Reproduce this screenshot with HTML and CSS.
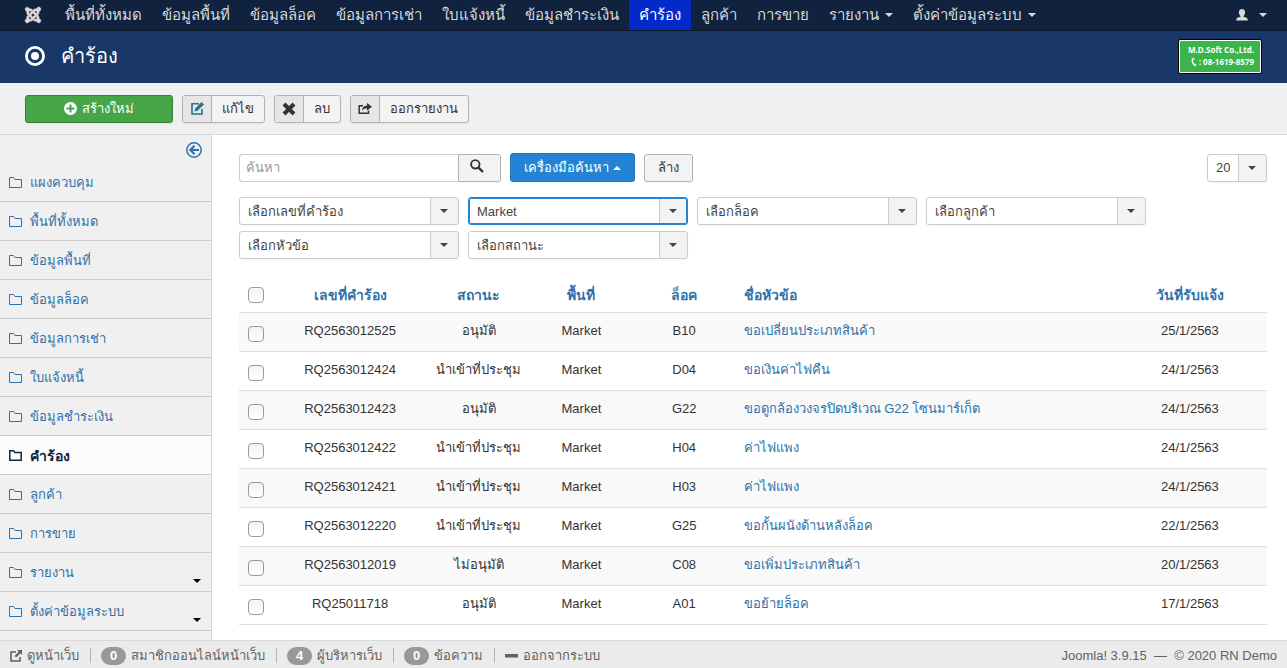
FILE: index.html
```html
<!DOCTYPE html>
<html lang="th">
<head>
<meta charset="utf-8">
<title>คำร้อง</title>
<link rel="stylesheet" href="styles.css">
</head>
<body class="page">
<svg class="sprite" aria-hidden="true">
  <symbol id="folder" viewBox="0 0 13 11"><path d="M.5 10.500V.5h4l1.500 2h6.500v8z" fill="none" stroke="currentColor"/></symbol>
  <symbol id="folder-bold" viewBox="0 0 13 11"><path d="M.8 10.200V.8h3.700L6 2.500h6.200v7.700z" fill="none" stroke="currentColor" stroke-width="1.500"/></symbol>
</svg>

<nav class="navbar">
  <a class="nav-link nav-logo" href="#" aria-label="Joomla"><svg width="18" height="18" viewBox="0 0 448 512"><path fill="currentColor" stroke="currentColor" stroke-width="14" d="M.6 92.1C.6 58.8 27.4 32 60.4 32c30 0 54.5 21.9 59.2 50.2 32.6-7.6 67.1.6 96.5 30l-44.3 44.3c-20.5-20.5-42.6-16.3-55.4-3.5-14.3 14.3-14.3 37.9 0 52.2l99.5 99.5-44 44.3c-87.7-87.2-49.7-49.7-99.8-99.7-26.8-26.5-35-64.8-24.8-98.9C20.4 144.6.6 120.7.6 92.1zm129.5 116.4l44.3 44.3c10-10 89.7-89.7 99.7-99.8 14.3-14.3 37.6-14.3 51.9 0 12.8 12.8 17 35-3.5 55.4l44 44.3c31.2-31.2 38.5-67.6 28.9-101.2 29.2-4.1 51.9-29.2 51.9-59.5 0-33.2-26.8-60.1-59.8-60.1-30.3 0-55.4 22.5-59.5 51.6-33.8-9.9-71.7-1.5-98.3 25.1-18.3 19.1-71.1 71.5-99.6 99.9zm266.3 152.2c8.2-32.7-.9-68.5-26.3-93.9-11.8-12.2 5 4.7-99.5-99.7l-44.3 44.3 99.7 99.7c14.3 14.3 14.3 37.6 0 51.9-12.8 12.8-35 17-55.4-3.5l-44 44.3c27.6 30.2 68 38.8 102.7 28 5.5 27.4 29.7 48.1 58.9 48.1 33 0 59.8-26.8 59.8-60.1 0-30.2-22.5-55-51.6-59.1zm-84.3-53.1l-44-44.3c-87 86.4-50.4 50.4-99.7 99.8-14.3 14.3-37.6 14.3-51.9 0-13.1-13.4-16.9-35.3 3.2-55.4l-44-44.3c-30.2 30.2-38 65.2-29.5 98.3-26.7 6-46.2 29.9-46.2 58.2C0 453.2 26.8 480 59.8 480c28.6 0 52.5-19.8 58.6-46.7 32.7 8.2 68.5-.6 94.2-26 32.1-32 12.2-12.4 99.5-99.7z"/></svg></a>
  <a class="nav-link" href="#">พื้นที่ทั้งหมด</a>
  <a class="nav-link" href="#">ข้อมูลพื้นที่</a>
  <a class="nav-link" href="#">ข้อมูลล็อค</a>
  <a class="nav-link" href="#">ข้อมูลการเช่า</a>
  <a class="nav-link" href="#">ใบแจ้งหนี้</a>
  <a class="nav-link" href="#">ข้อมูลชำระเงิน</a>
  <a class="nav-link nav-active" href="#">คำร้อง</a>
  <a class="nav-link" href="#">ลูกค้า</a>
  <a class="nav-link" href="#">การขาย</a>
  <a class="nav-link" href="#">รายงาน<span class="caret"></span></a>
  <a class="nav-link" href="#">ตั้งค่าข้อมูลระบบ<span class="caret"></span></a>
  <a class="nav-link nav-user" href="#" aria-label="User"><svg width="12" height="12" viewBox="0 0 12 12"><path fill="currentColor" d="M6 0c2 0 3.100 1.400 3.100 3.300C9.100 5 8.300 6.500 7.500 7v.8c2.500.4 4.300 1.400 4.300 3.200v.6H.2V11c0-1.800 1.800-2.800 4.300-3.200V7C3.700 6.500 2.900 5 2.900 3.300 2.900 1.400 4 0 6 0z"/></svg><span class="caret"></span></a>
</nav>

<header class="header">
  <h1 class="header-title"><svg width="20" height="20" viewBox="0 0 20 20"><circle cx="10" cy="10" r="8.600" fill="none" stroke="currentColor" stroke-width="2.800"/><circle cx="10" cy="10" r="4" fill="currentColor"/></svg>คำร้อง</h1>
  <a class="brand" href="#">
    <span class="brand-name">M.D.Soft Co.,Ltd.</span>
    <span class="brand-phone"><svg width="6" height="10" viewBox="0 0 6 10"><path d="M2.300 1C.3 3 1.300 7 4.800 8.800M1.800 1.500l1.700 1M3.800 8.300l1.200-1.500" fill="none" stroke="currentColor" stroke-width="1.300"/></svg>: 08-1619-8579</span>
  </a>
</header>

<div class="toolbar">
  <button class="btn btn-new" type="button"><svg width="13" height="13" viewBox="0 0 13 13"><circle cx="6.500" cy="6.500" r="6.500" fill="#fff"/><path d="M6.500 2.500v8M2.500 6.500h8" stroke="#46a546" stroke-width="2"/></svg>สร้างใหม่</button>
  <button class="btn btn-tool" type="button"><span class="btn-icon btn-icon-edit"><svg width="13" height="13" viewBox="0 0 13 13"><path d="M8 1.800H1v10.200h10V7" fill="none" stroke="currentColor" stroke-width="1.600"/><path d="M10.500 0L13 2.400 6.500 8.800 3.500 9.600 4.200 6.500z" fill="currentColor"/></svg></span><span class="btn-text">แก้ไข</span></button>
  <button class="btn btn-tool" type="button"><span class="btn-icon"><svg width="14" height="14" viewBox="0 0 14 14"><path d="M2 2l10 10M12 2L2 12" stroke="currentColor" stroke-width="4"/></svg></span><span class="btn-text">ลบ</span></button>
  <button class="btn btn-tool" type="button"><span class="btn-icon"><svg width="14" height="12" viewBox="0 0 14 12"><path d="M5 2.700H1.200V10.200h9.300V7.500" fill="none" stroke="currentColor" stroke-width="1.500"/><path d="M9 0l5 3.800-5 3.700V5.200C6.500 5.200 5 6 4 8c0-3.500 2-5.300 5-5.600z" fill="currentColor"/></svg></span><span class="btn-text">ออกรายงาน</span></button>
</div>

<div class="body">
  <aside class="sidebar">
    <button class="toggle" type="button" aria-label="Toggle sidebar"><svg width="16" height="16" viewBox="0 0 16 16"><circle cx="8" cy="8" r="7.200" fill="none" stroke="currentColor" stroke-width="1.500"/><path d="M13 8H5M8.500 3.800L4.300 8l4.200 4.200" fill="none" stroke="currentColor" stroke-width="2.200"/></svg></button>
    <a class="side-link" href="#"><svg class="folder"><use href="#folder"/></svg>แผงควบคุม</a>
    <a class="side-link" href="#"><svg class="folder"><use href="#folder"/></svg>พื้นที่ทั้งหมด</a>
    <a class="side-link" href="#"><svg class="folder"><use href="#folder"/></svg>ข้อมูลพื้นที่</a>
    <a class="side-link" href="#"><svg class="folder"><use href="#folder"/></svg>ข้อมูลล็อค</a>
    <a class="side-link" href="#"><svg class="folder"><use href="#folder"/></svg>ข้อมูลการเช่า</a>
    <a class="side-link" href="#"><svg class="folder"><use href="#folder"/></svg>ใบแจ้งหนี้</a>
    <a class="side-link" href="#"><svg class="folder"><use href="#folder"/></svg>ข้อมูลชำระเงิน</a>
    <a class="side-link side-active" href="#"><svg class="folder"><use href="#folder-bold"/></svg>คำร้อง</a>
    <a class="side-link" href="#"><svg class="folder"><use href="#folder"/></svg>ลูกค้า</a>
    <a class="side-link" href="#"><svg class="folder"><use href="#folder"/></svg>การขาย</a>
    <a class="side-link" href="#"><svg class="folder"><use href="#folder"/></svg>รายงาน<span class="caret side-caret"></span></a>
    <a class="side-link" href="#"><svg class="folder"><use href="#folder"/></svg>ตั้งค่าข้อมูลระบบ<span class="caret side-caret"></span></a>
  </aside>

  <main class="content">
    <div class="search-row">
      <div class="search-group">
        <input class="search-input" type="text" placeholder="ค้นหา" aria-label="ค้นหา">
        <button class="btn search-btn" type="button" aria-label="ค้นหา"><svg width="14" height="14" viewBox="0 0 14 14"><circle cx="5.300" cy="5.300" r="4.200" fill="none" stroke="currentColor" stroke-width="1.900"/><path d="M8.300 8.300l4.700 4.700" stroke="currentColor" stroke-width="2.400"/></svg></button>
      </div>
      <button class="btn btn-primary" type="button">เครื่องมือค้นหา<span class="caret caret-up"></span></button>
      <button class="btn btn-clear" type="button">ล้าง</button>
      <div class="select select-limit"><select aria-label="จำนวนรายการ"><option>20</option></select></div>
    </div>
    <div class="filters">
      <div class="select"><select aria-label="เลขที่คำร้อง"><option>เลือกเลขที่คำร้อง</option></select></div>
      <div class="select select-on"><select aria-label="พื้นที่"><option>Market</option></select></div>
      <div class="select"><select aria-label="ล็อค"><option>เลือกล็อค</option></select></div>
      <div class="select"><select aria-label="ลูกค้า"><option>เลือกลูกค้า</option></select></div>
      <div class="select"><select aria-label="หัวข้อ"><option>เลือกหัวข้อ</option></select></div>
      <div class="select"><select aria-label="สถานะ"><option>เลือกสถานะ</option></select></div>
    </div>
    <table class="table">
      <colgroup><col class="col-check"><col class="col-wide"><col class="col-mid"><col class="col-mid"><col class="col-mid"><col><col class="col-wide"></colgroup>
      <thead>
        <tr><th><input class="check" type="checkbox" aria-label="เลือกทั้งหมด"></th><th><a href="#">เลขที่คำร้อง</a></th><th><a href="#">สถานะ</a></th><th><a href="#">พื้นที่</a></th><th><a href="#">ล็อค</a></th><th class="left"><a href="#">ชื่อหัวข้อ</a></th><th><a href="#">วันที่รับแจ้ง</a></th></tr>
      </thead>
      <tbody>
        <tr><td><input class="check" type="checkbox" aria-label="RQ2563012525"></td><td>RQ2563012525</td><td>อนุมัติ</td><td>Market</td><td>B10</td><td class="left"><a href="#">ขอเปลี่ยนประเภทสินค้า</a></td><td>25/1/2563</td></tr>
        <tr><td><input class="check" type="checkbox" aria-label="RQ2563012424"></td><td>RQ2563012424</td><td>นำเข้าที่ประชุม</td><td>Market</td><td>D04</td><td class="left"><a href="#">ขอเงินค่าไฟคืน</a></td><td>24/1/2563</td></tr>
        <tr><td><input class="check" type="checkbox" aria-label="RQ2563012423"></td><td>RQ2563012423</td><td>อนุมัติ</td><td>Market</td><td>G22</td><td class="left"><a href="#">ขอดูกล้องวงจรปิดบริเวณ G22 โซนมาร์เก็ต</a></td><td>24/1/2563</td></tr>
        <tr><td><input class="check" type="checkbox" aria-label="RQ2563012422"></td><td>RQ2563012422</td><td>นำเข้าที่ประชุม</td><td>Market</td><td>H04</td><td class="left"><a href="#">ค่าไฟแพง</a></td><td>24/1/2563</td></tr>
        <tr><td><input class="check" type="checkbox" aria-label="RQ2563012421"></td><td>RQ2563012421</td><td>นำเข้าที่ประชุม</td><td>Market</td><td>H03</td><td class="left"><a href="#">ค่าไฟแพง</a></td><td>24/1/2563</td></tr>
        <tr><td><input class="check" type="checkbox" aria-label="RQ2563012220"></td><td>RQ2563012220</td><td>นำเข้าที่ประชุม</td><td>Market</td><td>G25</td><td class="left"><a href="#">ขอกั้นผนังด้านหลังล็อค</a></td><td>22/1/2563</td></tr>
        <tr><td><input class="check" type="checkbox" aria-label="RQ2563012019"></td><td>RQ2563012019</td><td>ไม่อนุมัติ</td><td>Market</td><td>C08</td><td class="left"><a href="#">ขอเพิ่มประเภทสินค้า</a></td><td>20/1/2563</td></tr>
        <tr><td><input class="check" type="checkbox" aria-label="RQ25011718"></td><td>RQ25011718</td><td>อนุมัติ</td><td>Market</td><td>A01</td><td class="left"><a href="#">ขอย้ายล็อค</a></td><td>17/1/2563</td></tr>
      </tbody>
    </table>
  </main>
</div>

<footer class="status">
  <a class="status-item" href="#"><svg width="12" height="12" viewBox="0 0 12 12"><path d="M6 2H1v9h9V7" fill="none" stroke="currentColor" stroke-width="1.600"/><path d="M7 0h5v5l-1.700-1.700-4.100 4.200-1.600-1.600 4.100-4.200z" fill="currentColor"/></svg>ดูหน้าเว็บ</a>
  <span class="status-item"><span class="badge">0</span>สมาชิกออนไลน์หน้าเว็บ</span>
  <span class="status-item"><span class="badge">4</span>ผู้บริหารเว็บ</span>
  <a class="status-item" href="#"><span class="badge">0</span>ข้อความ</a>
  <a class="status-item" href="#"><svg width="13" height="4" viewBox="0 0 13 4"><path d="M0 0h13v3.500H0z" fill="currentColor"/></svg>ออกจากระบบ</a>
  <span class="copyright">Joomla! 3.9.15 &nbsp;—&nbsp; © 2020 RN Demo</span>
</footer>
</body>
</html>
```
FILE: styles.css
```css
* { box-sizing: border-box; }

.page {
  margin: 0;
  min-height: 100vh;
  display: flex;
  flex-direction: column;
  background: #fff;
  color: #333;
  font: 13px/18px "Liberation Sans", sans-serif;
}
.page a { text-decoration: none; }
.page button, .page input, .page select { font: inherit; }
.sprite { display: none; }

.caret {
  display: inline-block;
  border: 4px solid transparent;
  border-top-color: currentColor;
  border-bottom: 0;
}
.caret-up {
  border-top: 0;
  border-bottom: 4px solid currentColor;
}

/* Top navigation */
.navbar {
  display: flex;
  height: 31px;
  padding: 0 10px 0 13px;
  background: #10223e;
  border-bottom: 1px solid #0b1626;
  white-space: nowrap;
}
.nav-link {
  display: flex;
  align-items: center;
  gap: 6px;
  padding: 0 10px;
  color: #d9d9d9;
  font-size: 15px;
}
.nav-logo { padding: 0 13px 0 11px; }
.nav-active { background: #0329c8; color: #fff; }
.nav-user { gap: 11px; margin-left: auto; }

/* Title bar */
.header {
  display: flex;
  align-items: center;
  justify-content: space-between;
  height: 52px;
  padding: 0 25px 2px;
  background: #1a3867;
}
.header-title {
  display: flex;
  align-items: center;
  gap: 16px;
  margin: 0;
  color: #fff;
  font-size: 20px;
  font-weight: normal;
  line-height: 30px;
}
.brand {
  display: flex;
  flex-direction: column;
  align-items: flex-end;
  justify-content: center;
  width: 84px;
  height: 35px;
  padding-right: 7px;
  background: #39b54a;
  border: 1px solid #000;
  box-shadow: inset 0 0 0 1px #fff;
  border-radius: 2px;
  color: #fff;
  font: bold 8px/12px "Open Sans", sans-serif;
  white-space: nowrap;
}
.brand-phone {
  display: flex;
  align-items: center;
  gap: 2px;
}

/* Buttons */
.btn {
  display: flex;
  align-items: center;
  justify-content: center;
  height: 28px;
  padding: 0 13px;
  border: 1px solid #b3b3b3;
  border-radius: 3px;
  background: #f3f3f3;
  box-shadow: 0 1px 2px rgba(0, 0, 0, 0.05);
  color: #333;
  white-space: nowrap;
}
.toolbar {
  display: flex;
  align-items: center;
  gap: 9px;
  height: 52px;
  padding: 0 25px;
  background: #f0f0f0;
  border-bottom: 1px solid #d9d9d9;
}
.btn-new {
  gap: 5px;
  width: 148px;
  background: #46a546;
  border-color: #378137;
  color: #fff;
}
.btn-tool { padding: 0; overflow: hidden; }
.btn-icon {
  display: flex;
  align-items: center;
  justify-content: center;
  align-self: stretch;
  width: 29px;
  background: #e6e6e6;
  border-right: 1px solid #b3b3b3;
}
.btn-icon-edit { color: #24748c; }
.btn-text { padding: 0 10px; }

/* Body columns */
.body { display: flex; flex: 1; }
.sidebar {
  flex: none;
  width: 212px;
  background: #f0f0f0;
  border-right: 1px solid #d9d9d9;
}
.toggle {
  display: flex;
  align-items: flex-start;
  width: 16px;
  height: 28px;
  margin: 0 9px 0 auto;
  padding: 7px 0 0;
  border: 0;
  background: none;
  color: #3071a9;
}
.side-link {
  display: flex;
  align-items: center;
  gap: 8px;
  height: 39px;
  padding: 1px 9px 0;
  border-bottom: 1px solid #ccc;
  color: #3071a9;
}
.side-active {
  background: #fcfcfc;
  color: #10223e;
  font-size: 14px;
  font-weight: bold;
}
.folder { width: 13px; height: 11px; }
.side-caret { margin: 16px 1px 0 auto; color: #000; }

.content {
  flex: 1;
  min-width: 0;
  padding: 18px 20px 15px 27px;
}
.search-row {
  display: flex;
  align-items: center;
  gap: 9px;
  height: 29px;
}
.search-group { display: flex; width: 262px; }
.search-input {
  flex: 1;
  min-width: 0;
  height: 28px;
  padding: 0 6px;
  border: 1px solid #ccc;
  border-right: 0;
  border-radius: 3px 0 0 3px;
}
.search-input::placeholder { color: #999; }
.search-btn {
  width: 43px;
  padding: 0 6px 4px 0;
  border-radius: 0 3px 3px 0;
}
.btn-primary {
  gap: 4px;
  height: 29px;
  background: #2384d3;
  border-color: #1f76bd;
  color: #fff;
}

/* Drop-downs: the arrow cell shares the grid area of the select */
.select { display: grid; width: 220px; align-items: center; }
.select select {
  grid-area: 1 / 1;
  appearance: none;
  width: 100%;
  height: 28px;
  padding: 1px 36px 0 8px;
  border: 1px solid #ccc;
  border-radius: 3px;
  background: linear-gradient(#ccc, #ccc) right 27px top / 1px 100% no-repeat,
    linear-gradient(#f3f3f3, #f3f3f3) right / 27px 100% no-repeat, #fff;
  box-shadow: 0 1px 2px rgba(0, 0, 0, 0.05);
  color: #444;
}
.select::after {
  content: "";
  grid-area: 1 / 1;
  justify-self: end;
  margin-right: 11px;
  border: 4px solid transparent;
  border-top-color: #444;
  border-bottom: 0;
  pointer-events: none;
}
.select-on select {
  border-color: #2384d3;
  box-shadow: inset 0 0 0 1px #2384d3;
}
.select-limit { width: 60px; margin-left: auto; }
.filters {
  display: flex;
  flex-wrap: wrap;
  gap: 6px 9px;
  margin: 15px 0 18px;
}

/* Request list */
.table {
  width: 100%;
  table-layout: fixed;
  border-collapse: collapse;
}
.col-check { width: 34px; }
.col-wide { width: 15%; }
.col-mid { width: 10%; }
.table a { color: #3071a9; }
.table th, .table td {
  height: 39px;
  padding: 9px 8px 7px;
  border-bottom: 1px solid #ddd;
  text-align: center;
  vertical-align: top;
}
.table th { height: 35px; font-size: 14px; }
.table .left { text-align: left; }
.table tbody tr:nth-child(odd) { background: #f9f9f9; }
.check {
  display: block;
  appearance: none;
  width: 16px;
  height: 16px;
  margin: 4px 0 0 1px;
  border: 1px solid #999;
  border-radius: 4px;
  background: linear-gradient(#f3f3f3, #fff);
}
.table th .check { margin-top: 1px; }

/* Status bar */
.status {
  display: flex;
  align-items: center;
  height: 28px;
  padding: 2px 10px 0;
  background: #ebebeb;
  border-top: 1px solid #d9d9d9;
  color: #626262;
  white-space: nowrap;
}
.status-item {
  display: flex;
  align-items: center;
  gap: 5px;
  height: 15px;
  padding-right: 11px;
  margin-right: 10px;
  border-right: 1px solid #b3b3b3;
  color: #626262;
}
.status-item:nth-child(5) { border-right: 0; }
.badge {
  width: 25px;
  border-radius: 9px;
  background: #999;
  color: #fff;
  font-weight: bold;
  text-align: center;
}
.copyright { margin-left: auto; }
```
